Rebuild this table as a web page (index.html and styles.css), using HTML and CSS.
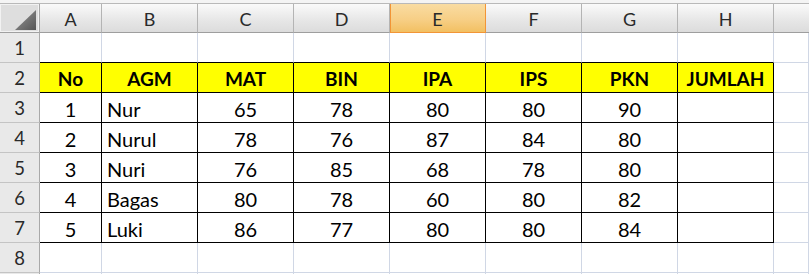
FILE: index.html
```html
<!DOCTYPE html>
<html>
<head>
<meta charset="utf-8">
<link rel="stylesheet" href="styles.css">
</head>
<body>
<div class="topstrip"></div>
<div class="sheet">
  <div class="corner"><svg class="tri" width="21" height="20" viewBox="0 0 21 20"><defs><linearGradient id="g" x1="0" y1="0" x2="1" y2="1"><stop offset="0" stop-color="#9a9a9a"/><stop offset="1" stop-color="#555"/></linearGradient></defs><polygon points="21,0 21,20 0,20" fill="url(#g)"/></svg></div>
  <div class="ch">A</div><div class="ch">B</div><div class="ch">C</div><div class="ch">D</div><div class="ch sel">E</div><div class="ch">F</div><div class="ch">G</div><div class="ch">H</div><div class="ch last"></div>

  <div class="rh">1</div>
  <div class="c bb"></div><div class="c bb"></div><div class="c bb"></div><div class="c bb"></div><div class="c bb"></div><div class="c bb"></div><div class="c bb"></div><div class="c bb"></div><div class="c"></div>

  <div class="rh">2</div>
  <div class="c t hd">No</div><div class="c t hd">AGM</div><div class="c t hd">MAT</div><div class="c t hd">BIN</div><div class="c t hd">IPA</div><div class="c t hd">IPS</div><div class="c t hd">PKN</div><div class="c t hd">JUMLAH</div><div class="c"></div>

  <div class="rh">3</div>
  <div class="c t">1</div><div class="c t l">Nur</div><div class="c t">65</div><div class="c t">78</div><div class="c t">80</div><div class="c t">80</div><div class="c t">90</div><div class="c t"></div><div class="c"></div>

  <div class="rh">4</div>
  <div class="c t">2</div><div class="c t l">Nurul</div><div class="c t">78</div><div class="c t">76</div><div class="c t">87</div><div class="c t">84</div><div class="c t">80</div><div class="c t"></div><div class="c"></div>

  <div class="rh">5</div>
  <div class="c t">3</div><div class="c t l">Nuri</div><div class="c t">76</div><div class="c t">85</div><div class="c t">68</div><div class="c t">78</div><div class="c t">80</div><div class="c t"></div><div class="c"></div>

  <div class="rh">6</div>
  <div class="c t">4</div><div class="c t l">Bagas</div><div class="c t">80</div><div class="c t">78</div><div class="c t">60</div><div class="c t">80</div><div class="c t">82</div><div class="c t"></div><div class="c"></div>

  <div class="rh">7</div>
  <div class="c t">5</div><div class="c t l">Luki</div><div class="c t">86</div><div class="c t">77</div><div class="c t">80</div><div class="c t">80</div><div class="c t">84</div><div class="c t"></div><div class="c"></div>

  <div class="rh">8</div>
  <div class="c"></div><div class="c"></div><div class="c"></div><div class="c"></div><div class="c"></div><div class="c"></div><div class="c"></div><div class="c"></div><div class="c"></div>

  <div class="rh nb"></div>
  <div class="c nb"></div><div class="c nb"></div><div class="c nb"></div><div class="c nb"></div><div class="c nb"></div><div class="c nb"></div><div class="c nb"></div><div class="c nb"></div><div class="c nb"></div>
</div>
</body>
</html>
```

FILE: styles.css
```css
html, body {
  margin: 0;
  padding: 0;
  background: #ffffff;
  overflow: hidden;
}
body {
  width: 809px;
  height: 274px;
  font-family: Lato, "Open Sans", sans-serif;
}
.topstrip {
  height: 3px;
  background: #f4f4f4;
  border-bottom: 1px solid #b9b9b9;
}
.sheet {
  display: grid;
  grid-template-columns: 40px 62px repeat(7, 96px) 1fr;
  grid-template-rows: 29px repeat(8, 30px) 1px;
  height: 270px;
  overflow: hidden;
}
.corner {
  box-sizing: border-box;
  background: #dedede;
  border-right: 1px solid #a8a8a8;
  border-bottom: 1px solid #a0a0a0;
  box-shadow: inset 1px 1px 0 #f2f2f2, inset -1px -1px 0 #f2f2f2;
  position: relative;
}
.tri {
  position: absolute;
  left: 15px;
  top: 6px;
}
.ch {
  box-sizing: border-box;
  background: linear-gradient(#fafafa, #e6e6e6 60%, #dcdcdc);
  border-right: 1px solid #b4b4b4;
  border-bottom: 1px solid #9e9e9e;
  display: flex;
  align-items: center;
  justify-content: center;
  font-size: 18px;
  color: #2a2a2a;
  padding-top: 1px;
}
.ch.sel {
  background: linear-gradient(#f9dca2, #f7cf86 55%, #f2c062);
  border-right: 1px solid #f29536;
  border-bottom: 1px solid #f29536;
  box-shadow: inset 1px 0 0 #f29536;
}
.ch.last {
  border-right: none;
}
.rh {
  box-sizing: border-box;
  background: #e9e9e9;
  border-right: 1px solid #a9a9a9;
  border-bottom: 1px solid #c4c4c4;
  display: flex;
  align-items: center;
  justify-content: center;
  font-size: 18.5px;
  color: #2a2a2a;
  padding-top: 1px;
}
.c {
  box-sizing: border-box;
  border-right: 1px solid #d0d7e5;
  border-bottom: 1px solid #d0d7e5;
  display: flex;
  align-items: center;
  justify-content: center;
  font-size: 20px;
  color: #000;
  padding-top: 2px;
  white-space: nowrap;
  overflow: hidden;
}
.nb {
  border-bottom: none;
}
.c.bb {
  border-bottom-color: #000;
}
.c.t {
  border-right-color: #000;
  border-bottom-color: #000;
}
.c.l {
  justify-content: flex-start;
  padding-left: 5px;
}
.c.hd {
  background: #ffff00;
  font-weight: bold;
  font-size: 19px;
}
```
